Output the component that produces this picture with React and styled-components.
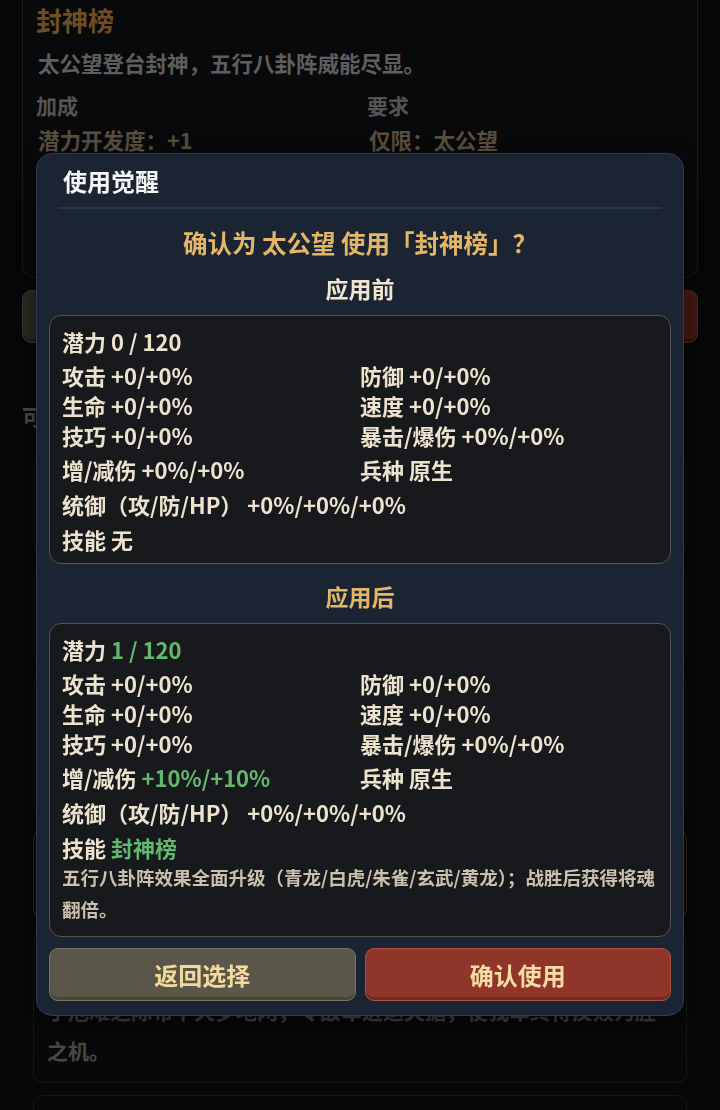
import React from 'react'
import styled, { createGlobalStyle } from 'styled-components'

const GlobalStyle = createGlobalStyle`
  * { box-sizing: border-box; }
  html, body {
    margin: 0;
    padding: 0;
    background: #0c0e10;
    overflow: hidden;
  }
  body {
    font-family: "Noto Sans CJK SC", "Noto Sans", sans-serif;
  }
`

/* ---------- page behind the dialog ---------- */

const Page = styled.div`
  margin-top: -14px;
  padding: 0 22px 40px;
`

const InfoCard = styled.section`
  height: 292px;
  border: 1px solid #34353a;
  border-radius: 12px;
  background: #111215;
  padding: 14px 13px 0;
`

const CardTitle = styled.h2`
  margin: 0;
  font-size: 26px;
  line-height: 38px;
  font-weight: 700;
  color: #d99c4c;
`

const CardDesc = styled.p`
  margin: 8px 0 0 2px;
  font-size: 21.5px;
  line-height: 32px;
  font-weight: 700;
  color: #bdbdbd;
`

const InfoGrid = styled.div`
  display: grid;
  grid-template-columns: 1fr 1fr;
  column-gap: 14px;
`

const InfoHead = styled.div`
  margin-top: 11px;
  font-size: 21px;
  line-height: 30px;
  font-weight: 700;
  color: #a8a8a8;
`

const InfoValue = styled.div`
  margin: 5px 0 0 2px;
  font-size: 21.5px;
  line-height: 30px;
  font-weight: 700;
  color: #b29d7f;
`

const PageButtons = styled.div`
  display: flex;
  gap: 9px;
  margin-top: 12px;
`

const SectionTitle = styled.h3`
  margin: 56px 0 0;
  font-size: 22px;
  line-height: 32px;
  font-weight: 700;
  color: #9e9e9e;
`

const HeroList = styled.div`
  display: flex;
  flex-direction: column;
  gap: 12px;
  margin: 24px 11px 0;
`

const HeroCard = styled.div`
  height: ${p => (p.$h ? `${p.$h}px` : 'auto')};
  border: 1px solid ${p => (p.$gold ? '#7c6238' : '#2e2f34')};
  border-radius: 10px;
  background: ${p => (p.$gold ? '#15130f' : '#101114')};
  padding: 17px 13px 12px;
  overflow: hidden;
`

const HeroName = styled.div`
  font-size: 22px;
  line-height: 41px;
  font-weight: 700;
  color: #c9c9c9;
`

const HeroDesc = styled.div`
  font-size: 21px;
  line-height: 40px;
  font-weight: 700;
  color: #969696;
`

/* ---------- dialog ---------- */

const Overlay = styled.div`
  position: fixed;
  inset: 0;
  background: rgba(0, 0, 0, 0.5);
  display: flex;
  justify-content: center;
  align-items: flex-start;
  padding-top: 153px;
`

const Modal = styled.div`
  width: 648px;
  background: #1b2433;
  border: 1px solid #2e3b4e;
  border-radius: 16px;
  padding: 6px 12px 14px;
  box-shadow: 0 12px 32px rgba(0, 0, 0, 0.55);
`

const ModalHeader = styled.div`
  margin: 0 9px;
  padding: 5px 5px 11px;
  font-size: 24px;
  line-height: 31px;
  font-weight: 700;
  color: #f6f6f6;
  border-bottom: 2px solid #27354a;
`

const Question = styled.div`
  margin-top: 18px;
  text-align: center;
  font-size: 24.5px;
  line-height: 32px;
  font-weight: 700;
  color: #e4b667;
`

const PhaseLabel = styled.div`
  margin-top: ${p => p.$gap}px;
  text-align: center;
  font-size: 23px;
  line-height: 32px;
  font-weight: 700;
  color: ${p => (p.$accent ? '#e4b667' : '#efe6d0')};
`

const StatBox = styled.div`
  margin-top: 11px;
  background: #18191c;
  border: 1px solid #55544f;
  border-radius: 12px;
  padding: 9px 12px 7px;
  color: #ece3cf;
  font-size: 22px;
  font-weight: 700;
`

const PotentialLine = styled.div`
  line-height: 32px;
`

const StatGrid = styled.div`
  display: grid;
  grid-template-columns: 1fr 1fr;
  margin-top: ${p => p.$mt}px;
  line-height: ${p => p.$lh}px;
`

const StatLine = styled.div`
  margin-top: 1px;
  line-height: 34px;
`

const Value = styled.span`
  color: ${p => (p.$up ? '#63b86f' : 'inherit')};
`

const SkillDesc = styled.div`
  margin: -3px 0 4px;
  font-size: 18.5px;
  line-height: 32px;
  color: #c9c1ae;
`

const ButtonRow = styled.div`
  display: flex;
  gap: 9px;
  margin-top: 11px;
`

const ActionButton = styled.button`
  flex: 1;
  height: 53px;
  border-radius: 9px;
  border: 1px solid ${p => (p.$danger ? '#ad5141' : '#7b7462')};
  background: ${p => (p.$danger ? '#8f3529' : '#5a5649')};
  color: ${p => (p.$danger ? '#f7dca6' : '#f3d99a')};
  box-shadow: inset 0 -3px 0 rgba(0, 0, 0, 0.2);
  font-family: inherit;
  font-size: 24px;
  font-weight: 700;
  cursor: pointer;
`

const before = {
  potential: '0 / 120',
  grid: [
    ['攻击', '+0/+0%'], ['防御', '+0/+0%'],
    ['生命', '+0/+0%'], ['速度', '+0/+0%'],
    ['技巧', '+0/+0%'], ['暴击/爆伤', '+0%/+0%'],
  ],
  dmg: '+0%/+0%',
  troop: '原生',
  command: '+0%/+0%/+0%',
  skill: '无',
}

const after = {
  ...before,
  potential: '1 / 120',
  dmg: '+10%/+10%',
  skill: '封神榜',
  skillDesc: '五行八卦阵效果全面升级（青龙/白虎/朱雀/玄武/黄龙）；战胜后获得将魂翻倍。',
  up: { potential: true, dmg: true, skill: true },
}

const Stats = ({ data }) => {
  const up = data.up || {}
  return (
    <StatBox>
      <PotentialLine>潜力 <Value $up={up.potential}>{data.potential}</Value></PotentialLine>
      <StatGrid $mt={3} $lh={30}>
        {data.grid.map(([k, v]) => (
          <div key={k}>{k} <Value>{v}</Value></div>
        ))}
      </StatGrid>
      <StatGrid $mt={2} $lh={34}>
        <div>增/减伤 <Value $up={up.dmg}>{data.dmg}</Value></div>
        <div>兵种 <Value>{data.troop}</Value></div>
      </StatGrid>
      <StatLine>统御（攻/防/HP） <Value>{data.command}</Value></StatLine>
      <StatLine>技能 <Value $up={up.skill}>{data.skill}</Value></StatLine>
      {data.skillDesc && <SkillDesc>{data.skillDesc}</SkillDesc>}
    </StatBox>
  )
}

const heroes = [
  { name: '姜子牙', desc: '道法通玄，执掌封神。', h: 100 },
  { name: '哪吒', desc: '三头六臂，风火轮疾。', h: 96 },
  { name: '杨戬', desc: '八九玄功，天眼洞察虚实。', h: 142 },
  { name: '太公望', desc: '当前选择', h: 90, gold: true },
  {
    name: '雷震子',
    desc: '于危难之际布下天罗地网，令敌军进退失据，使我军终得反败为胜之机。',
  },
  { name: '黄天化', desc: '攒心钉出，百步穿杨。', h: 120 },
]

export default function App() {
  return (
    <>
      <GlobalStyle />
      <Page>
        <InfoCard>
          <CardTitle>封神榜</CardTitle>
          <CardDesc>太公望登台封神，五行八卦阵威能尽显。</CardDesc>
          <InfoGrid>
            <InfoHead>加成</InfoHead>
            <InfoHead>要求</InfoHead>
            <InfoValue>潜力开发度：+1</InfoValue>
            <InfoValue>仅限：太公望</InfoValue>
          </InfoGrid>
        </InfoCard>
        <PageButtons>
          <ActionButton>取消</ActionButton>
          <ActionButton $danger>使用</ActionButton>
        </PageButtons>
        <SectionTitle>可用武将</SectionTitle>
        <HeroList>
          {heroes.map(h => (
            <HeroCard key={h.name} $h={h.h} $gold={h.gold}>
              <HeroName>{h.name}</HeroName>
              <HeroDesc>{h.desc}</HeroDesc>
            </HeroCard>
          ))}
        </HeroList>
      </Page>

      <Overlay>
        <Modal>
          <ModalHeader>使用觉醒</ModalHeader>
          <Question>确认为 太公望 使用「封神榜」？</Question>
          <PhaseLabel $gap={13}>应用前</PhaseLabel>
          <Stats data={before} />
          <PhaseLabel $gap={16} $accent>应用后</PhaseLabel>
          <Stats data={after} />
          <ButtonRow>
            <ActionButton>返回选择</ActionButton>
            <ActionButton $danger>确认使用</ActionButton>
          </ButtonRow>
        </Modal>
      </Overlay>
    </>
  )
}
